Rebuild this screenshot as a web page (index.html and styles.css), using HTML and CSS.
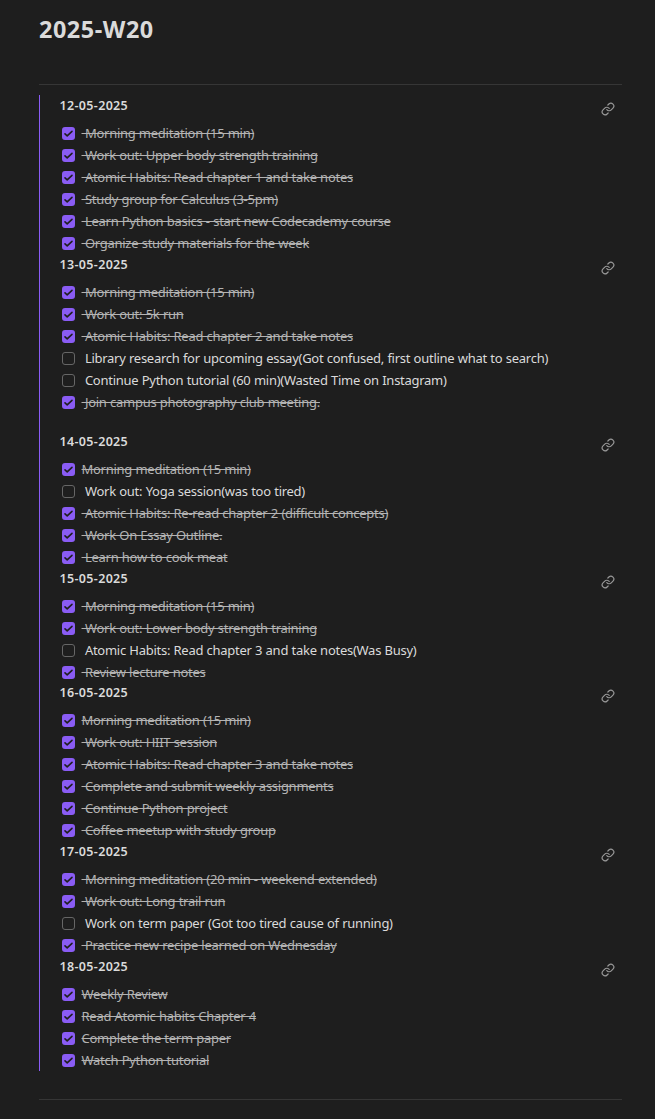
FILE: index.html
```
<!DOCTYPE html>
<html lang="en">
<head>
<meta charset="utf-8">
<title>2025-W20</title>
<link rel="stylesheet" href="styles.css">
</head>
<body>
<main class="note">
<h1 class="title">2025-W20</h1>
<div class="embed" id="days"></div>
</main>
<script src="script.js"></script>
</body>
</html>
```
FILE: styles.css
```
* { box-sizing: border-box; }
body { margin: 0; background: #1e1e1e; color: #dadada; font-family: "Noto Sans", "Open Sans", sans-serif; font-size: 13px; }
.note { height: 1119px; padding: 12px 33px 0 39px; }
.title { margin: 0; height: 72px; font-size: 23.4px; line-height: 34px; font-weight: 700; letter-spacing: 0.55px; }
.embed { border-top: 1px solid #363636; border-bottom: 1px solid #363636; padding: 10px 0 28px; }
.day { border-left: 1px solid #8a5cf5; padding-left: 19.5px; }
.gap { padding-bottom: 18px; }
.tight { margin-bottom: -1px; }
.head { height: 27px; display: flex; justify-content: space-between; }
.date { margin: 0; font-size: 12.5px; font-weight: 600; line-height: 22px; letter-spacing: 0.34px; }
.link { width: 14px; height: 14px; margin: 6.5px 6.7px 0 0; fill: none; stroke: #999; stroke-width: 2; stroke-linecap: round; stroke-linejoin: round; }
.tasks { margin: 0; padding: 0 0 0 2.5px; list-style: none; }
.task { height: 22px; display: flex; align-items: center; gap: 6.5px; line-height: 22px; white-space: pre; }
.box { flex: none; width: 13px; height: 13px; border: 1px solid #666; border-radius: 3px; }
.done .box { border: 0; background: #8a5cf5; }
.check { display: block; width: 13px; height: 13px; fill: none; stroke: #1e1e1e; stroke-width: 1.6; stroke-linecap: round; stroke-linejoin: round; }
.label { letter-spacing: -0.27px; word-spacing: 0.3px; }
.done .label { color: #b3b3b3; text-decoration: line-through; text-decoration-thickness: 1px; }
```
FILE: script.js
```
// Each task: "x" or "o" for its state, then the label with its own leading space.
const days = [
  ["12-05-2025", ["x Morning meditation (15 min)", "x Work out: Upper body strength training", "x Atomic Habits: Read chapter 1 and take notes", "x Study group for Calculus (3-5pm)", "x Learn Python basics - start new Codecademy course", "x Organize study materials for the week"]],
  ["13-05-2025", ["x Morning meditation (15 min)", "x Work out: 5k run", "x Atomic Habits: Read chapter 2 and take notes", "o Library research for upcoming essay(Got confused, first outline what to search)", "o Continue Python tutorial (60 min)(Wasted Time on Instagram)", "x Join campus photography club meeting."], "gap"],
  ["14-05-2025", ["xMorning meditation (15 min)", "o Work out: Yoga session(was too tired)", "x Atomic Habits: Re-read chapter 2 (difficult concepts)", "x Work On Essay Outline.", "x Learn how to cook meat"]],
  ["15-05-2025", ["x Morning meditation (15 min)", "x Work out: Lower body strength training", "o Atomic Habits: Read chapter 3 and take notes(Was Busy)", "x Review lecture notes"], "tight"],
  ["16-05-2025", ["xMorning meditation (15 min)", "x Work out: HIIT session", "x Atomic Habits: Read chapter 3 and take notes", "x Complete and submit weekly assignments", "x Continue Python project", "x Coffee meetup with study group"]],
  ["17-05-2025", ["x Morning meditation (20 min - weekend extended)", "x Work out: Long trail run", "o Work on term paper (Got too tired cause of running)", "x Practice new recipe learned on Wednesday"]],
  ["18-05-2025", ["xWeekly Review", "xRead Atomic habits Chapter 4", "xComplete the term paper", "xWatch Python tutorial"]]
];
const link = '<svg class="link" viewBox="0 0 24 24"><path d="M10 13a5 5 0 0 0 7.54.54l3-3a5 5 0 0 0-7.07-7.07l-1.72 1.71"/><path d="M14 11a5 5 0 0 0-7.54-.54l-3 3a5 5 0 0 0 7.07 7.07l1.71-1.71"/></svg>';
const check = '<svg class="check" viewBox="0 0 13 13"><path d="M3 6.8l2.2 2L10 4.4"/></svg>';
document.getElementById("days").innerHTML = days.map(([date, tasks, gap = ""]) =>
  `<section class="day ${gap}"><div class="head"><h2 class="date">${date}</h2>${link}</div><ul class="tasks">` +
  tasks.map(t => `<li class="task ${t[0] === "x" ? "done" : ""}"><span class="box">${t[0] === "x" ? check : ""}</span><span class="label">${t.slice(1)}</span></li>`).join("") +
  "</ul></section>").join("");
```
